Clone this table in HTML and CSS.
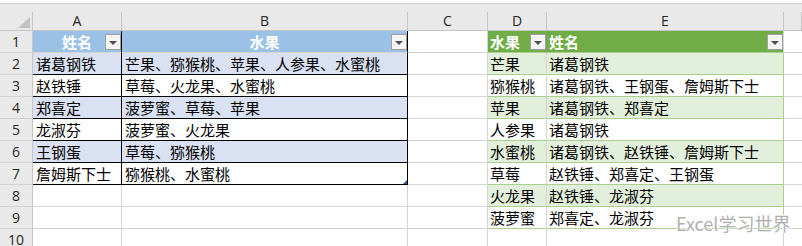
FILE: index.html
```html
<!DOCTYPE html>
<html lang="zh-CN">
<head>
<meta charset="utf-8">
<title>Excel</title>
<link rel="stylesheet" href="styles.css">
</head>
<body>
<div class="topbar"></div>
<div class="sheet">
  <div class="corner"><span class="tri"></span></div>
  <div class="ch">A</div>
  <div class="ch">B</div>
  <div class="ch">C</div>
  <div class="ch">D</div>
  <div class="ch">E</div>
  <div class="ch last"></div>

  <div class="rh">1</div>
  <div class="c t1h t1a">姓名<span class="fb"><i></i></span></div>
  <div class="c t1h t1b">水果<span class="fb"><i></i></span></div>
  <div class="c"></div>
  <div class="c t2h t2d">水果<span class="fb"><i></i></span></div>
  <div class="c t2h t2e">姓名<span class="fb"><i></i></span></div>
  <div class="c last"></div>

  <div class="rh">2</div>
  <div class="c t1 t1a band1">诸葛钢铁</div>
  <div class="c t1 t1b band1">芒果、猕猴桃、苹果、人参果、水蜜桃</div>
  <div class="c"></div>
  <div class="c t2 t2d band2">芒果</div>
  <div class="c t2 t2e band2">诸葛钢铁</div>
  <div class="c last"></div>

  <div class="rh">3</div>
  <div class="c t1 t1a">赵铁锤</div>
  <div class="c t1 t1b">草莓、火龙果、水蜜桃</div>
  <div class="c"></div>
  <div class="c t2 t2d">猕猴桃</div>
  <div class="c t2 t2e">诸葛钢铁、王钢蛋、詹姆斯下士</div>
  <div class="c last"></div>

  <div class="rh">4</div>
  <div class="c t1 t1a band1">郑喜定</div>
  <div class="c t1 t1b band1">菠萝蜜、草莓、苹果</div>
  <div class="c"></div>
  <div class="c t2 t2d band2">苹果</div>
  <div class="c t2 t2e band2">诸葛钢铁、郑喜定</div>
  <div class="c last"></div>

  <div class="rh">5</div>
  <div class="c t1 t1a">龙淑芬</div>
  <div class="c t1 t1b">菠萝蜜、火龙果</div>
  <div class="c"></div>
  <div class="c t2 t2d">人参果</div>
  <div class="c t2 t2e">诸葛钢铁</div>
  <div class="c last"></div>

  <div class="rh">6</div>
  <div class="c t1 t1a band1">王钢蛋</div>
  <div class="c t1 t1b band1">草莓、猕猴桃</div>
  <div class="c"></div>
  <div class="c t2 t2d band2">水蜜桃</div>
  <div class="c t2 t2e band2">诸葛钢铁、赵铁锤、詹姆斯下士</div>
  <div class="c last"></div>

  <div class="rh">7</div>
  <div class="c t1 t1a">詹姆斯下士</div>
  <div class="c t1 t1b">猕猴桃、水蜜桃<span class="handle"></span></div>
  <div class="c"></div>
  <div class="c t2 t2d">草莓</div>
  <div class="c t2 t2e">赵铁锤、郑喜定、王钢蛋</div>
  <div class="c last"></div>

  <div class="rh">8</div>
  <div class="c"></div>
  <div class="c"></div>
  <div class="c"></div>
  <div class="c t2 t2d band2">火龙果</div>
  <div class="c t2 t2e band2">赵铁锤、龙淑芬</div>
  <div class="c last"></div>

  <div class="rh">9</div>
  <div class="c"></div>
  <div class="c"></div>
  <div class="c"></div>
  <div class="c t2 t2d">菠萝蜜</div>
  <div class="c t2 t2e">郑喜定、龙淑芬</div>
  <div class="c last"></div>

  <div class="rh">10</div>
  <div class="c"></div>
  <div class="c"></div>
  <div class="c"></div>
  <div class="c"></div>
  <div class="c"></div>
  <div class="c last"></div>
</div>
<div class="watermark">Excel学习世界</div>
</body>
</html>
```

FILE: styles.css
```css
html, body {
  margin: 0;
  padding: 0;
  background: #ffffff;
  width: 802px;
  height: 246px;
  overflow: hidden;
  position: relative;
}

.topbar {
  height: 12px;
  background: linear-gradient(#ffffff 0, #ffffff 3px, #d2d2d2 3px, #d2d2d2 4px, #e9e9e9 4px);
}

.sheet {
  display: grid;
  grid-template-columns: 33px 89px 286px 80px 59px 237px 1fr;
  grid-template-rows: 19px;
  grid-auto-rows: 22px;
}

.corner {
  background: #e9e9e9;
  border-right: 1px solid #c6c6c6;
  border-bottom: 1px solid #c6c6c6;
  position: relative;
}

.corner .tri {
  position: absolute;
  right: 2px;
  bottom: 2px;
  width: 0;
  height: 0;
  border-left: 12px solid transparent;
  border-bottom: 11px solid #c2c2c2;
}

.ch {
  background: #e9e9e9;
  border-right: 1px solid #c6c6c6;
  border-bottom: 1px solid #c6c6c6;
  font-family: "Open Sans", "Noto Sans", sans-serif;
  font-size: 14px;
  line-height: 18px;
  color: #262626;
  text-align: center;
}

.rh {
  background: #e9e9e9;
  border-right: 1px solid #c6c6c6;
  border-bottom: 1px solid #d2d2d2;
  font-family: "Open Sans", "Noto Sans", sans-serif;
  font-size: 14px;
  line-height: 21px;
  color: #262626;
  text-align: center;
}

.c {
  box-sizing: border-box;
  border-right: 1px solid #d4d4d4;
  border-bottom: 1px solid #d4d4d4;
  font-family: "Noto Sans CJK SC", "Microsoft YaHei", sans-serif;
  font-size: 15px;
  line-height: 21px;
  color: #000000;
  padding: 0 0 0 3px;
  white-space: nowrap;
  overflow: hidden;
  position: relative;
}

.c.last {
  border-right: none;
}

/* table 1 */
.t1h {
  background: #9bc2e6;
  color: #ffffff;
  font-weight: 700;
  text-align: center;
  padding: 0;
  border-right-color: #000000;
}

.t1 {
  border-right-color: #000000;
  border-bottom-color: #000000;
}

.band1 {
  background: #d9e1f2;
}

.handle {
  position: absolute;
  right: 0;
  bottom: 0;
  width: 0;
  height: 0;
  border-left: 4px solid transparent;
  border-bottom: 4px solid #2f5597;
}

/* table 2 */
.t2h {
  background: #70ad47;
  color: #ffffff;
  font-weight: 700;
  border-bottom-color: #a9d08e;
  padding-left: 2px;
}

.t2h.t2d {
  border-right-color: #70ad47;
}

.t2 {
  border-bottom-color: #a9d08e;
  padding-left: 2px;
}

.t2e {
  border-right-color: #a9d08e;
}

.t2h.t2e {
  border-right-color: #d4d4d4;
}

.band2 {
  background: #e2efda;
}

/* filter button */
.fb {
  position: absolute;
  right: 0;
  top: 3px;
  box-sizing: border-box;
  width: 16px;
  height: 16px;
  background: #f4f4f4;
  border: 1px solid #a0a0a0;
  display: flex;
  align-items: center;
  justify-content: center;
}

.fb i {
  display: block;
  width: 0;
  height: 0;
  border-left: 4px solid transparent;
  border-right: 4px solid transparent;
  border-top: 4px solid #505050;
  margin-top: 1px;
}

.watermark {
  position: absolute;
  left: 676px;
  top: 211px;
  font-family: "Noto Sans CJK SC", "Liberation Sans", sans-serif;
  font-size: 18px;
  line-height: 24px;
  color: #b0b0b0;
  letter-spacing: 0;
  text-shadow: 1px 0 0 #ffffff, -1px 0 0 #ffffff, 0 1px 0 #ffffff, 0 -1px 0 #ffffff;
  white-space: nowrap;
}
```
